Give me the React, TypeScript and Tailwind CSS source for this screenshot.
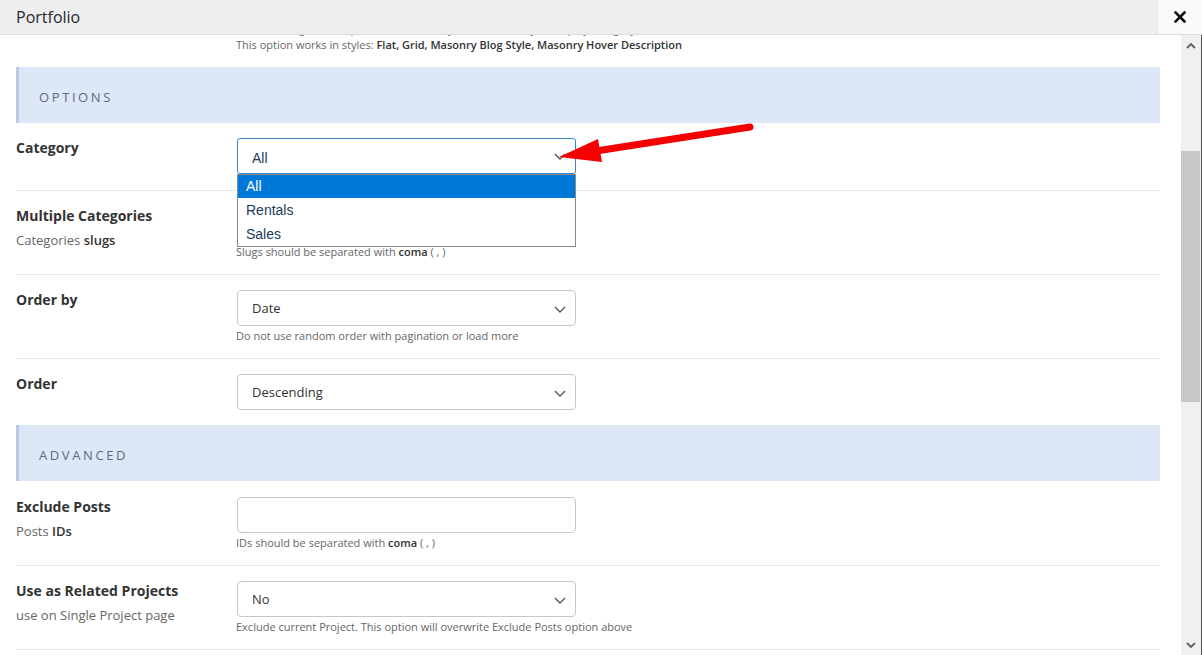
import React from 'react';

const font = { fontFamily: '"Open Sans", "Liberation Sans", sans-serif' };

const Chevron = ({ className = '' }: { className?: string }) => (
  <svg width="12" height="7" viewBox="0 0 12 7" className={className}>
    <path d="M1 1l5 5 5-5" fill="none" stroke="#555" strokeWidth="1.4" />
  </svg>
);

const Section = ({ title }: { title: string }) => (
  <div className="flex h-[56px] items-center border-l-[3px] border-[#b9cae6] bg-[#dde7f6] pl-[20px] pt-[5px]">
    <span className="text-[13px] tracking-[2.6px] text-[#5b6b7e]">{title}</span>
  </div>
);

const Row = ({
  label,
  sub,
  help,
  last,
  children,
}: {
  label: string;
  sub?: React.ReactNode;
  help?: React.ReactNode;
  last?: boolean;
  children: React.ReactNode;
}) => (
  <div
    className={`flex pt-[15px] ${last ? 'pb-[15px]' : 'border-b border-[#e8e8e8]'} ${
      !last && help ? 'pb-[15px]' : ''
    } ${!last && !help ? 'pb-[16px]' : ''}`}
  >
    <div className="w-[220px] shrink-0">
      <div className="text-[14px] font-bold leading-[20px] text-[#333]">{label}</div>
      {sub && <div className="mt-[4px] text-[13px] leading-[20px] text-[#666]">{sub}</div>}
    </div>
    <div className="flex flex-col">
      {children}
      {help && <div className="mt-[3px] text-[11px] leading-[14px] text-[#666]">{help}</div>}
    </div>
  </div>
);

const Select = ({ value }: { value: string }) => (
  <div className="ml-px flex h-[36px] w-[339px] items-center justify-between rounded-[4px] border border-[#c8c8c8] bg-white pl-[14px] pr-[9px] pt-[2px] text-[13px] text-[#333]">
    <span>{value}</span>
    <Chevron />
  </div>
);

const Input = () => <div className="ml-px h-[36px] w-[339px] rounded-[4px] border border-[#c8c8c8] bg-white" />;

const CategorySelect = () => (
  <div className="relative ml-px w-[339px]" style={{ fontFamily: '"Liberation Sans", Arial, sans-serif' }}>
    <div className="flex h-[36px] items-center justify-between rounded-[3px] border border-[#3d84c6] bg-white pl-[14px] pr-[9px] text-[14px] text-[#1d3b5a]">
      <span className="pt-[4px]">All</span>
      <Chevron />
    </div>
    <div className="absolute left-0 top-[36px] z-10 w-[339px] border border-[#8a8a8a] bg-white text-[14px] text-[#1d3b5a]">
      <div className="flex h-[23px] items-center bg-[#0078d7] pl-[8px] text-white">All</div>
      <div className="flex h-[24px] items-center pl-[8px]">Rentals</div>
      <div className="flex h-[24px] items-center pl-[8px]">Sales</div>
    </div>
  </div>
);

export default function App() {
  return (
    <div className="relative h-[655px] w-[1202px] overflow-hidden bg-white" style={font}>
      <div className="flex h-[35px] items-center justify-between border-b border-[#dcdcdc] bg-[#eeeeee]">
        <span className="pl-[16px] text-[16px] text-[#23282d]">Portfolio</span>
        <div className="flex h-full w-[45px] items-center justify-center border-l border-[#e2e2e2] bg-[#f9f9f9]">
          <svg width="12" height="12" viewBox="0 0 12 12">
            <path d="M1.5 1.5l9 9M10.5 1.5l-9 9" stroke="#111" strokeWidth="2.6" strokeLinecap="square" />
          </svg>
        </div>
      </div>
      <div className="flex h-[620px]">
        <div className="flex-1 overflow-hidden pl-[16px] pr-[21px]">
          <div className="-mt-[14px] pb-[14px] pl-[220px] text-[11px] leading-[16px] text-[#666]">
            <div>Choose categories for portfolio items, only the selected styles display category</div>
            <div>
              This option works in styles:{' '}
              <span className="font-semibold text-[#333]">Flat, Grid, Masonry Blog Style, Masonry Hover Description</span>
            </div>
          </div>
          <Section title="OPTIONS" />
          <Row label="Category">
            <CategorySelect />
          </Row>
          <Row
            label="Multiple Categories"
            sub={
              <>
                Categories <span className="font-semibold text-[#333]">slugs</span>
              </>
            }
            help={
              <>
                Slugs should be separated with <span className="font-semibold text-[#333]">coma</span> ( , )
              </>
            }
          >
            <Input />
          </Row>
          <Row label="Order by" help="Do not use random order with pagination or load more">
            <Select value="Date" />
          </Row>
          <Row label="Order" last>
            <Select value="Descending" />
          </Row>
          <Section title="ADVANCED" />
          <div className="pt-px">
            <Row
              label="Exclude Posts"
              sub={
                <>
                  Posts <span className="font-semibold text-[#333]">IDs</span>
                </>
              }
              help={
                <>
                  IDs should be separated with <span className="font-semibold text-[#333]">coma</span> ( , )
                </>
              }
            >
              <Input />
            </Row>
          </div>
          <Row
            label="Use as Related Projects"
            sub="use on Single Project page"
            help="Exclude current Project. This option will overwrite Exclude Posts option above"
          >
            <Select value="No" />
          </Row>
        </div>
        <div className="flex w-[21px] border-r border-[#555]">
          <div className="relative w-[20px] bg-[#f0f0f0]">
            <svg className="absolute left-[5px] top-[8px]" width="10" height="6" viewBox="0 0 10 6">
              <path d="M1 5l4-4 4 4" fill="none" stroke="#606060" strokeWidth="1.8" />
            </svg>
            <div className="absolute left-0 top-[116px] h-[251px] w-[19px] bg-[#c8c8c8]" />
            <svg className="absolute bottom-[7px] left-[5px]" width="10" height="6" viewBox="0 0 10 6">
              <path d="M1 1l4 4 4-4" fill="none" stroke="#606060" strokeWidth="1.8" />
            </svg>
          </div>
        </div>
      </div>
      <svg className="pointer-events-none absolute left-0 top-0" width="1202" height="655">
        <line x1="596" y1="151" x2="750" y2="127" stroke="#f40000" strokeWidth="7" strokeLinecap="round" />
        <polygon points="559,157 598,139 602,162" fill="#f40000" />
      </svg>
    </div>
  );
}
